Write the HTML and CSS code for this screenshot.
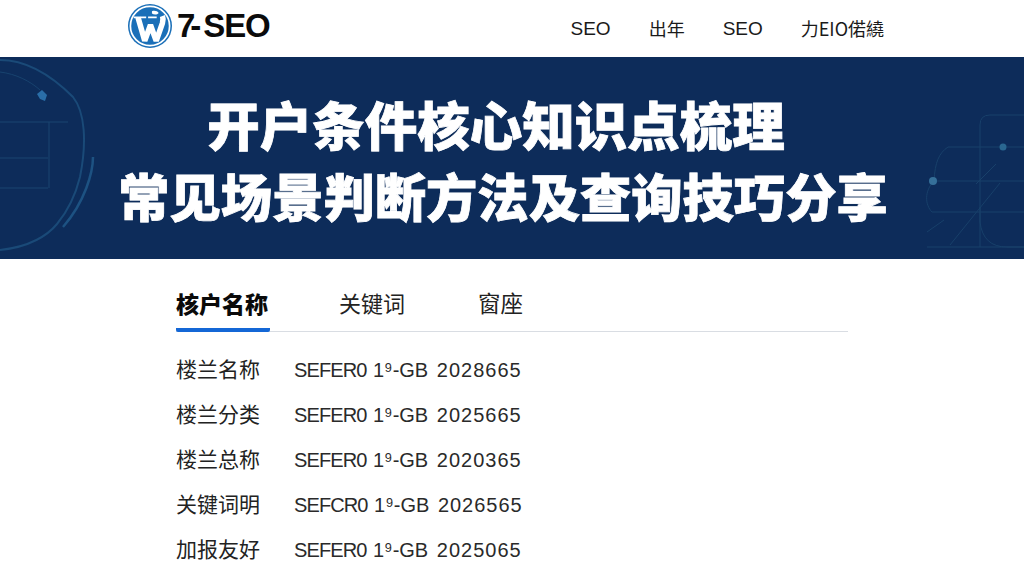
FILE: index.html
```html
<!DOCTYPE html>
<html lang="zh">
<head>
<meta charset="utf-8">
<title>开户条件核心知识点梳理</title>
<link rel="stylesheet" href="styles.css">
</head>
<body>
<header class="topbar">
  <a class="brand">
    <svg class="brand-mark" viewBox="0 0 46 46" width="44" height="44" aria-hidden="true">
      <circle cx="23" cy="23" r="23" fill="#1a6fb8"/>
      <circle cx="23" cy="23" r="20.500" fill="none" stroke="#fff" stroke-width="1.800"/>
      <path d="M10.500 14 L17.500 38.500 L23.500 22 L29.500 38.500 L36 20 C37 17 37 15 36 12.500" fill="none" stroke="#fff" stroke-width="5.800" stroke-linejoin="bevel"/>
      <path d="M6 13 H19 V15 H6 Z M21 13 H30 V15 H21 Z" fill="#fff"/>
      <path d="M25 7.500 C28 6.500 31 7.500 32 9.500 C30.500 11.500 27 11.500 25 10 Z" fill="#fff"/>
    </svg>
    <span class="brand-name"><span class="brand-seven">7-</span><span class="brand-seo">SEO</span></span>
  </a>
  <nav class="nav">
    <a class="nav-item">SEO</a>
    <a class="nav-item nav-item-cjk">出年</a>
    <a class="nav-item">SEO</a>
    <a class="nav-item nav-item-cjk">力EIO偌繞</a>
  </nav>
</header>

<section class="hero">
  <svg class="hero-art hero-art-left" viewBox="0 0 100 202" width="100" height="202" aria-hidden="true">
    <path d="M0 3 C30 3 55 22 73 40 C85 55 87 85 80 120 C75 140 67 155 57 167 C48 178 30 190 0 193" fill="none" stroke="#1a4a78" stroke-width="2"/>
    <path d="M0 15 C16 17 30 24 40 33" fill="none" stroke="#18436f" stroke-width="1"/>
    <path d="M93 100 C93 115 85 145 63 170" fill="none" stroke="#1d5282" stroke-width="2.500"/>
    <path d="M0 65 H68 M49 65 V131 M0 101 H48 M0 131 H48" fill="none" stroke="#1a4570" stroke-width="1"/>
    <path d="M42 33 L47 38 L45 44 L40 42 L37 37 Z" fill="#2a6ea8"/>
  </svg>
  <svg class="hero-art hero-art-right" viewBox="0 0 100 202" width="100" height="202" aria-hidden="true">
    <path d="M100 58 H66 Q56 58 56 68 V165 Q59 190 83 190 H100" fill="none" stroke="#18406a" stroke-width="1"/>
    <path d="M24 90 H100 M8 124 H100 M8 155 H100 M3 190 H100 M56 150 V190" fill="none" stroke="#18406a" stroke-width="1"/>
    <path d="M24 90 C15 96 11 105 10 124 C0 134 1 148 8 155" fill="none" stroke="#18406a"/>
    <path d="M52 127 L72 107 M26 188 L76 126 M3 175 L20 163" fill="none" stroke="#18406a"/>
    <circle cx="9" cy="124" r="4" fill="#356f99"/>
    <circle cx="79" cy="90" r="3.500" fill="#2a6790"/>
  </svg>
  <h1 class="hero-title">
    <span class="hero-line hero-line-a">开户条件核心知识点梳理</span>
    <span class="hero-line hero-line-b">常见场景判断方法及查询技巧分享</span>
  </h1>
</section>

<main class="content">
  <div class="tabs">
    <a class="tab tab-active">核户名称</a>
    <a class="tab">关键词</a>
    <a class="tab tab-last">窗座</a>
  </div>
  <dl class="rows">
    <div class="row"><dt>楼兰名称</dt><dd><span class="code-a">SEFER0</span> 1⁹-GB <span class="code-n">2028665</span></dd></div>
    <div class="row"><dt>楼兰分类</dt><dd><span class="code-a">SEFER0</span> 1⁹-GB <span class="code-n">2025665</span></dd></div>
    <div class="row"><dt>楼兰总称</dt><dd><span class="code-a">SEFER0</span> 1⁹-GB <span class="code-n">2020365</span></dd></div>
    <div class="row"><dt>关键词明</dt><dd><span class="code-a">SEFCR0</span> 1⁹-GB <span class="code-n">2026565</span></dd></div>
    <div class="row"><dt>加报友好</dt><dd><span class="code-a">SEFER0</span> 1⁹-GB <span class="code-n">2025065</span></dd></div>
  </dl>
</main>
</body>
</html>
```
FILE: styles.css
```css
* { box-sizing: border-box; }
html, body { margin: 0; height: 576px; overflow: hidden; background: #fff; }
body { font-family: "Liberation Sans", "Noto Sans CJK SC", sans-serif; color: #1c1c1c; }

.topbar {
  height: 57px;
  padding: 0 140px 0 128px;
  display: flex;
  align-items: center;
  justify-content: space-between;
  background: #fff;
}
.brand { display: flex; align-items: center; gap: 5px; margin-bottom: 6px; }
.brand-mark { display: block; }
.brand-name {
  font: 700 33px/1 "Liberation Sans", sans-serif;
  color: #0b0b0b;
}
.brand-seven { letter-spacing: -5px; }
.brand-seo { letter-spacing: -1.200px; margin-left: 7px; }
.nav { display: flex; align-items: center; gap: 38px; font-size: 19px; line-height: 24px; }
.nav-item { color: #1a1a1a; }
.nav-item-cjk { font-size: 18px; font-family: "Noto Sans CJK SC", "Liberation Sans", sans-serif; padding-bottom: 2px; }

.hero {
  position: relative;
  height: 202px;
  overflow: hidden;
  display: flex;
  align-items: center;
  justify-content: center;
  padding: 2px 18px 0 0;
  background: #0d2c5a;
}
.hero-art { position: absolute; top: 0; filter: blur(.6px); }
.hero-art-left { left: 0; }
.hero-art-right { right: 0; }
.hero-title {
  position: relative;
  margin: 0;
  display: flex;
  flex-direction: column;
  align-items: center;
  gap: 12px;
  color: #fff;
  font-family: "Noto Sans CJK SC", sans-serif;
  font-weight: 900;
  -webkit-text-stroke: .8px #fff;
}
.hero-line { display: block; line-height: 60px; white-space: nowrap; }
.hero-line-a { font-size: 52.500px; margin-right: 14px; }
.hero-line-b { font-size: 51.300px; }

.content { width: 672px; margin-left: 176px; }
.tabs {
  height: 73px;
  display: flex;
  gap: 69px;
  border-bottom: 1px solid #d9dde3;
  font-family: "Noto Sans CJK SC", sans-serif;
}
.tab {
  height: 73px;
  display: flex;
  align-items: center;
  padding-top: 17px;
  font-size: 22px;
  color: #222;
  border-bottom: 4px solid transparent;
}
.tab-active {
  width: 94px;
  padding-top: 18px;
  font-size: 23px;
  font-weight: 900;
  color: #0a0a0a;
  border-bottom-color: #1467d6;
  border-radius: 2px;
}
.tab-last { margin-left: 4px; font-size: 22.500px; }
.rows { margin: 15px 0 0; }
.row {
  height: 45px;
  display: flex;
  align-items: center;
}
.row dt { width: 118px; padding-bottom: 3px; font: 21px/28px "Noto Sans CJK SC", sans-serif; color: #222; }
.row dd { margin: 0; font-size: 20px; line-height: 28px; color: #2a2a2a; white-space: nowrap; }
.code-a { letter-spacing: -.9px; margin-right: 1px; }
.code-n { letter-spacing: 1px; margin-left: 3px; }
```
